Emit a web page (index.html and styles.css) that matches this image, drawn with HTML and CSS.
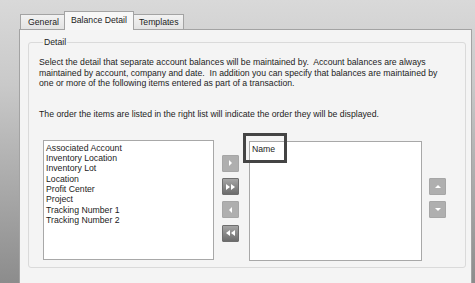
FILE: index.html
```html
<!DOCTYPE html>
<html lang="en">
<head>
    <meta charset="UTF-8" />
    <meta name="viewport" content="width=device-width, initial-scale=1" />
    <title>Balance Detail</title>
    <link rel="stylesheet" href="styles.css">
</head>
<body>
    <div class="window">
        <div class="tabs">
            <div class="tab">General</div>
            <div class="tab active">Balance Detail</div>
            <div class="tab last">Templates</div>
        </div>

        <div class="panel">
            <fieldset class="group">
                <legend>Detail</legend>
                <p class="intro">Select the detail that separate account balances will be maintained by.&nbsp; Account balances are always maintained by account, company and date.&nbsp; In addition you can specify that balances are maintained by one or more of the following items entered as part of a transaction.</p>
                <p class="note">The order the items are listed in the right list will indicate the order they will be displayed.</p>

                <div class="lists">
                    <ul class="listbox" id="available">
                        <li>Associated Account</li>
                        <li>Inventory Location</li>
                        <li>Inventory Lot</li>
                        <li>Location</li>
                        <li>Profit Center</li>
                        <li>Project</li>
                        <li>Tracking Number 1</li>
                        <li>Tracking Number 2</li>
                    </ul>

                    <div class="moves">
                        <button class="btn" title="Add">
                            <svg width="5" height="6" viewBox="0 0 5 6"><polygon points="1,0 4,3 1,6" fill="#fff"/></svg>
                        </button>
                        <button class="btn dark" title="Add all">
                            <svg width="10" height="6" viewBox="0 0 10 6"><polygon points="0,0 4,3 0,6" fill="#fff"/><polygon points="5,0 9,3 5,6" fill="#fff"/></svg>
                        </button>
                        <button class="btn" title="Remove">
                            <svg width="5" height="6" viewBox="0 0 5 6"><polygon points="4,0 1,3 4,6" fill="#fff"/></svg>
                        </button>
                        <button class="btn dark" title="Remove all">
                            <svg width="10" height="6" viewBox="0 0 10 6"><polygon points="4,0 0,3 4,6" fill="#fff"/><polygon points="9,0 5,3 9,6" fill="#fff"/></svg>
                        </button>
                    </div>

                    <div class="selected-wrap">
                        <ul class="listbox" id="selected">
                            <li>Name</li>
                        </ul>
                        <div class="callout"></div>
                    </div>

                    <div class="order">
                        <button class="btn" title="Move up">
                            <svg width="6" height="5" viewBox="0 0 6 5"><polygon points="0,4 3,1 6,4" fill="#fff"/></svg>
                        </button>
                        <button class="btn" title="Move down">
                            <svg width="6" height="5" viewBox="0 0 6 5"><polygon points="0,1 3,4 6,1" fill="#fff"/></svg>
                        </button>
                    </div>
                </div>
            </fieldset>
        </div>
    </div>
</body>
</html>
```

FILE: styles.css
```css
body {
    margin: 0;
    width: 475px;
    height: 283px;
    overflow: hidden;
    font-family: "Liberation Sans", Arial, sans-serif;
    font-size: 8.7px;
    color: #1c1c1c;
    background: linear-gradient(to bottom, #d9d9d9 0, #c9c9c9 30%, #8c8c8c 100%);
}
.window {
    padding: 11px 3px 0 19px;
}
.tabs {
    display: flex;
    align-items: flex-end;
    height: 18px;
    padding-left: 1px;
}
.tab {
    height: 15px;
    line-height: 15px;
    padding: 0 5px 0 7px;
    box-sizing: border-box;
    border: 1px solid #a3a3a3;
    border-bottom: none;
    border-right: none;
    background: linear-gradient(to bottom, #f2f2f2, #e3e3e3);
}
.tab.last {
    padding: 0 4px 0 5px;
    border-right: 1px solid #a3a3a3;
}
.tab.active {
    height: 19px;
    line-height: 16px;
    margin-bottom: -1px;
    padding: 0 6px;
    background: #f7f7f7;
    border-right: 1px solid #a3a3a3;
    position: relative;
}
.tab.active + .tab {
    border-left: none;
}
.panel {
    height: 251px;
    border: 1px solid #a3a3a3;
    background: #f4f4f4;
    padding: 7px 5px 0 8px;
}
.group {
    margin: 0;
    height: 229px;
    padding: 0 10px;
    border: 1px solid #dadada;
    border-radius: 3px;
}
.group legend {
    padding: 0 1px;
    margin-left: 4px;
    line-height: 11px;
}
.intro, .note {
    margin: 0;
    padding-right: 16px;
    line-height: 10.7px;
}
.intro {
    margin-top: 9px;
}
.note {
    margin-top: 20px;
}
.lists {
    display: flex;
    align-items: flex-start;
    margin-top: 20px;
    padding-left: 4px;
}
.listbox {
    list-style: none;
    margin: 0;
    padding: 2px 2px;
    box-sizing: border-box;
    height: 120px;
    border: 1px solid #a8a8a8;
    background: #fff;
    line-height: 10.3px;
}
#available {
    width: 171px;
}
#selected {
    width: 173px;
    margin-top: 1px;
}
.moves, .order {
    display: flex;
    flex-direction: column;
    gap: 6.3px;
}
.moves {
    margin: 0 10px 0 8px;
    padding-top: 15px;
}
.order {
    margin-left: 7px;
    padding-top: 38px;
}
.btn {
    width: 17px;
    height: 17px;
    padding: 0;
    border: 1px solid #a6a6a6;
    border-radius: 1px;
    background: #afafaf;
    display: flex;
    align-items: center;
    justify-content: center;
}
.btn.dark {
    border-color: #6e6e6e;
    background: linear-gradient(to bottom, #a5a5a5, #6c6c6c);
}
.selected-wrap {
    position: relative;
}
.callout {
    position: absolute;
    left: -6px;
    top: -7px;
    width: 44px;
    height: 30px;
    box-sizing: border-box;
    border: 3px solid #444;
}
```
